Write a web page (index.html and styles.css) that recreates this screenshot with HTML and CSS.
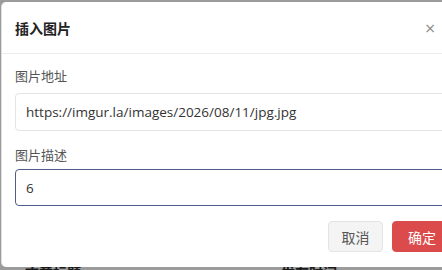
FILE: index.html
```html
<!DOCTYPE html>
<html lang="zh">
<head>
<meta charset="utf-8">
<link rel="stylesheet" href="styles.css">
</head>
<body>
<div class="page">
  <div class="page-text">
    <span class="bg-word">文章标题</span>
    <span class="bg-word second">发布时间</span>
  </div>
</div>
<div class="modal">
  <div class="modal-header">
    <span class="modal-title">插入图片</span>
    <span class="close">×</span>
  </div>
  <div class="modal-body">
    <label class="field-label">图片地址</label>
    <div class="input">https://imgur.la/images/2026/08/11/jpg.jpg</div>
    <label class="field-label second">图片描述</label>
    <div class="input focus">6</div>
    <div class="actions">
      <button class="btn cancel">取消</button>
      <button class="btn ok">确定</button>
    </div>
  </div>
</div>
</body>
</html>
```
FILE: styles.css
```css
html, body {
  margin: 0;
  padding: 0;
  width: 442px;
  height: 270px;
  overflow: hidden;
  font-family: "Noto Sans", "Noto Sans CJK SC", sans-serif;
}
body {
  background: #9b9b9b;
  position: relative;
}
.page {
  height: 270px;
  display: flex;
  flex-direction: column;
  justify-content: flex-end;
}
.page-text {
  display: flex;
  padding-left: 25px;
  height: 5px;
  overflow: visible;
}
.bg-word {
  font-size: 14px;
  color: #1a1a1a;
  line-height: 14px;
  font-weight: bold;
  font-family: "Noto Sans CJK SC", sans-serif;
}
.bg-word.second {
  margin-left: 200px;
}
.modal {
  position: absolute;
  left: 1px;
  top: 2px;
  width: 480px;
  height: 265px;
  background: #fff;
  border-radius: 5px;
  border-left: 1px solid #e0e0e0;
  box-sizing: border-box;
}
.modal-header {
  height: 52px;
  border-bottom: 1px solid #ececec;
  box-sizing: border-box;
  display: flex;
  align-items: center;
  padding: 0 0 0 13px;
}
.modal-title {
  font-family: "Noto Sans CJK SC", sans-serif;
  font-weight: bold;
  font-size: 14px;
  color: #222;
}
.close {
  margin-left: auto;
  margin-right: 45px;
  font-size: 14px;
  color: #888;
  font-family: "DejaVu Sans", sans-serif;
  line-height: 1;
}
.modal-body {
  padding: 13px 0 0 13px;
  display: flex;
  flex-direction: column;
}
.field-label {
  font-family: "Noto Sans CJK SC", sans-serif;
  font-size: 13px;
  color: #555;
  line-height: 18px;
  height: 18px;
  margin-bottom: 8px;
}
.field-label.second {
  margin-top: 15px;
  margin-bottom: 5px;
}
.input {
  height: 38px;
  box-sizing: border-box;
  border: 1px solid #e4e4e4;
  border-radius: 4px;
  padding: 0 10px;
  display: flex;
  align-items: center;
  font-size: 13.5px;
  color: #333;
  width: 470px;
  font-family: "Open Sans", "Noto Sans CJK SC", sans-serif;
}
.input.focus {
  border-color: #4c5f8c;
  height: 37px;
}
.actions {
  display: flex;
  gap: 9px;
  margin-top: 15px;
  padding-left: 313px;
}
.btn {
  height: 31px;
  border-radius: 4px;
  font-family: "Noto Sans CJK SC", sans-serif;
  font-size: 14px;
  padding: 0;
  white-space: nowrap;
  box-sizing: border-box;
  cursor: pointer;
}
.btn.cancel {
  background: #f4f4f4;
  border: 1px solid #e3e3e3;
  color: #555;
  width: 55px;
}
.btn.ok {
  background: #db4b4b;
  border: 1px solid #db4b4b;
  color: #fff;
  width: 60px;
}
```
